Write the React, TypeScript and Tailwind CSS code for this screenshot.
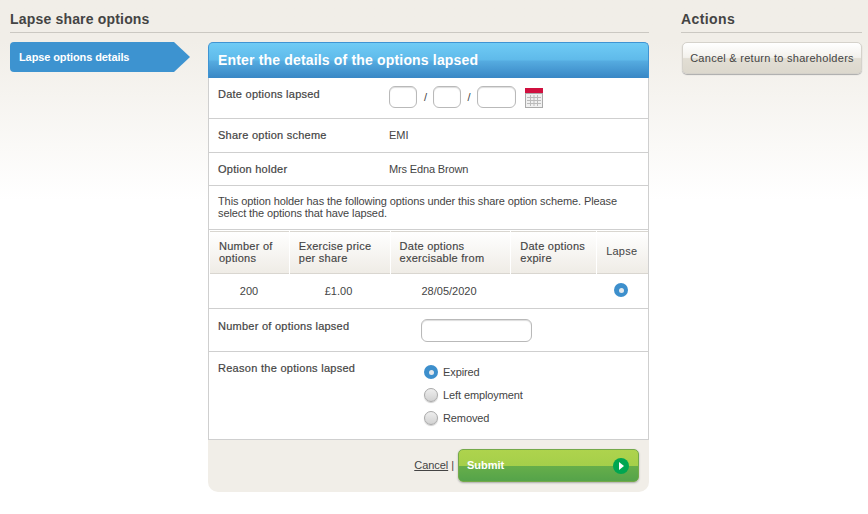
import type { ReactNode } from 'react'

const columns = [
  { label: ['Number of', 'options'], width: 'w-[79px]' },
  { label: ['Exercise price', 'per share'], width: 'w-[100px]' },
  { label: ['Date options', 'exercisable from'], width: 'w-[120px]' },
  { label: ['Date options', 'expire'], width: 'w-[85px]' },
]

function Radio({ checked }: { checked?: boolean }) {
  if (checked) {
    return (
      <span className="flex h-[14px] w-[14px] shrink-0 items-center justify-center rounded-full bg-[#3d8fcc]">
        <span className="h-[5px] w-[5px] rounded-full bg-[#e4e8ec]" />
      </span>
    )
  }
  return (
    <span className="h-[14px] w-[14px] shrink-0 rounded-full border border-[#a9a9a9] bg-gradient-to-b from-[#eeeeee] to-[#d2d2d2] shadow-[0_1px_1px_#ccc]" />
  )
}

function TextBox({ className }: { className: string }) {
  return (
    <span
      className={`block rounded-[6px] border border-[#b9b9b9] bg-white shadow-[inset_0_1px_1px_#ddd] ${className}`}
    />
  )
}

function Row({ label, children, className }: { label: string; children: ReactNode; className: string }) {
  return (
    <div className={`flex border-b border-[#cfcfcf] ${className}`}>
      <div className="w-[171px] pl-[9px] font-medium tracking-[0.25px] [-webkit-text-stroke:0.2px_#444]">{label}</div>
      {children}
    </div>
  )
}

function CalendarIcon() {
  return (
    <svg width="18" height="20" viewBox="0 0 18 20" className="ml-[9px] mt-[2px]">
      <rect x="0" y="0" width="18" height="5" fill="#d0103f" />
      <rect x="0.5" y="5.5" width="17" height="14" fill="#f0f0f0" stroke="#aaa" />
      <path d="M2 9.5h14M2 12.5h14M2 15.5h14M5.5 7v11M9 7v11M12.5 7v11" stroke="#bbb" fill="none" />
    </svg>
  )
}

export default function App() {
  return (
    <div className="h-[514px] w-[868px] overflow-hidden bg-gradient-to-b from-[#f1eee8] from-[8%] to-white to-[39%] font-['Liberation_Sans',Arial,sans-serif] text-[11px] text-[#444]">
      <div className="flex pl-[10px] pr-[6px]">
        {/* Main column */}
        <div className="w-[639px]">
          <h1 className="h-[33px] border-b border-[#cbc8c2] pt-[11px] text-[14px] font-bold leading-[16px] tracking-[0.18px] text-[#444]">
            Lapse share options
          </h1>

          <div className="mt-[9px] flex">
            {/* Step arrow */}
            <div className="flex h-[30px] w-[180px] items-center">
              <div className="flex h-[30px] w-[164px] items-center rounded-l-[4px] bg-[#3d93d0] pl-[9px] text-[11px] font-bold tracking-[-0.1px] text-white">
                Lapse options details
              </div>
              <div className="h-0 w-0 border-y-[15px] border-l-[16px] border-y-transparent border-l-[#3d93d0]" />
            </div>

            {/* Form card */}
            <div className="ml-[18px] w-[441px]">
              <div className="flex h-[36px] items-center rounded-t-[5px] border border-b-0 border-[#3f94d3] bg-[linear-gradient(#6fcbf5_0%,#5fbaea_48%,#55abe0_52%,#3887c5_100%)] pl-[9px] text-[14px] font-bold tracking-[0.17px] text-white">
                Enter the details of the options lapsed
              </div>

              <div className="border-x border-[#cfcfcf] bg-white">
                <Row label="Date options lapsed" className="h-[41px] pt-[8px]">
                  <div className="ml-[9px] flex h-[22px] items-center">
                    <TextBox className="h-[22px] w-[28px]" />
                    <span className="w-[16px] pl-[1px] text-center">/</span>
                    <TextBox className="h-[22px] w-[28px]" />
                    <span className="w-[16px] text-center">/</span>
                    <TextBox className="h-[22px] w-[39px]" />
                    <CalendarIcon />
                  </div>
                </Row>
                <Row label="Share option scheme" className="h-[34px] pt-[8px]">
                  <div className="ml-[9px] tracking-[-0.05px]">EMI</div>
                </Row>
                <Row label="Option holder" className="h-[33px] pt-[8px]">
                  <div className="ml-[9px] tracking-[-0.15px]">Mrs Edna Brown</div>
                </Row>
                <div className="h-[44px] border-b border-[#cfcfcf] pl-[9px] pr-[8px] pt-[9px] leading-[12px] tracking-[-0.1px]">
                  This option holder has the following options under this share option scheme. Please select the options that have lapsed.
                </div>

                {/* Options table */}
                <div className="flex h-[44px] pl-[1px] pt-[1px]">
                  {columns.map((col) => (
                    <div
                      key={col.label[0] + col.label[1]}
                      className={`mr-[1px] flex h-[43px] flex-col justify-center border-y border-[#d9d6d0] bg-gradient-to-b from-white to-[#efece6] pb-[2px] pl-[9px] font-medium leading-[12px] tracking-[0.25px] [-webkit-text-stroke:0.15px_#444] ${col.width}`}
                    >
                      <span>{col.label[0]}</span>
                      <span>{col.label[1]}</span>
                    </div>
                  ))}
                  <div className="flex h-[43px] w-[51px] items-center border-y border-[#d9d6d0] bg-gradient-to-b from-white to-[#efece6] pb-[2px] pl-[9px] tracking-[0.25px]">
                    Lapse
                  </div>
                </div>
                <div className="flex h-[35px] border-b border-[#cfcfcf] pt-[9px] text-center">
                  <div className="w-[80px]">200</div>
                  <div className="w-[99px]">£1.00</div>
                  <div className="w-[122px]">28/05/2020</div>
                  <div className="w-[86px]" />
                  <div className="flex w-[50px] justify-center">
                    <Radio checked />
                  </div>
                </div>

                <Row label="Number of options lapsed" className="h-[43px] pt-[9px]">
                  <TextBox className="ml-[41px] mt-[1px] h-[23px] w-[111px]" />
                </Row>

                <div className="flex h-[88px] border-b border-[#cfcfcf] pt-[8px]">
                  <div className="w-[212px] pl-[9px] font-medium tracking-[0.28px] [-webkit-text-stroke:0.2px_#444]">Reason the options lapsed</div>
                  <div className="flex flex-col gap-[9px] pl-[3px] pt-[5px]">
                    {[
                      { label: 'Expired', checked: true },
                      { label: 'Left employment', checked: false },
                      { label: 'Removed', checked: false },
                    ].map((item) => (
                      <div key={item.label} className="flex h-[14px] items-center gap-[5px] tracking-[-0.1px]">
                        <Radio checked={item.checked} />
                        <span>{item.label}</span>
                      </div>
                    ))}
                  </div>
                </div>
              </div>

              {/* Footer */}
              <div className="flex h-[52px] items-start justify-end rounded-b-[10px] bg-[#f1eee8] pr-[10px] pt-[9px]">
                <div className="mr-[4px] flex h-[33px] items-center tracking-[-0.05px]">
                  <a className="underline">Cancel</a>
                  <span className="ml-[3px]">|</span>
                </div>
                <div className="flex h-[33px] w-[181px] items-center justify-between rounded-[5px] border border-[#75a94a] bg-[linear-gradient(#aed34d_0%,#a5cf4a_50%,#66ae4a_52%,#55a34a_100%)] pl-[8px] pr-[9px] text-[11px] font-bold text-white shadow-[0_1px_2px_#aaa]">
                  Submit
                  <span className="flex h-[16px] w-[16px] items-center justify-center rounded-full bg-[#00a651]">
                    <span className="ml-[1px] h-0 w-0 border-y-[4px] border-l-[5px] border-y-transparent border-l-white" />
                  </span>
                </div>
              </div>
            </div>
          </div>
        </div>

        {/* Actions column */}
        <div className="ml-[32px] w-[181px]">
          <h2 className="h-[33px] border-b border-[#cbc8c2] pt-[11px] text-[14px] font-bold leading-[16px] tracking-[0.4px] text-[#444]">
            Actions
          </h2>
          <div className="ml-[1px] mt-[9px] flex h-[32px] w-[180px] items-center justify-center rounded-[5px] border border-[#d5d2cb] bg-[linear-gradient(#ffffff_0%,#f3f1ec_48%,#e2ded4_52%,#dcd8cd_100%)] text-[11px] tracking-[0.27px] text-[#444] shadow-[0_1px_1px_#aaa]">
            Cancel &amp; return to shareholders
          </div>
        </div>
      </div>
    </div>
  )
}
